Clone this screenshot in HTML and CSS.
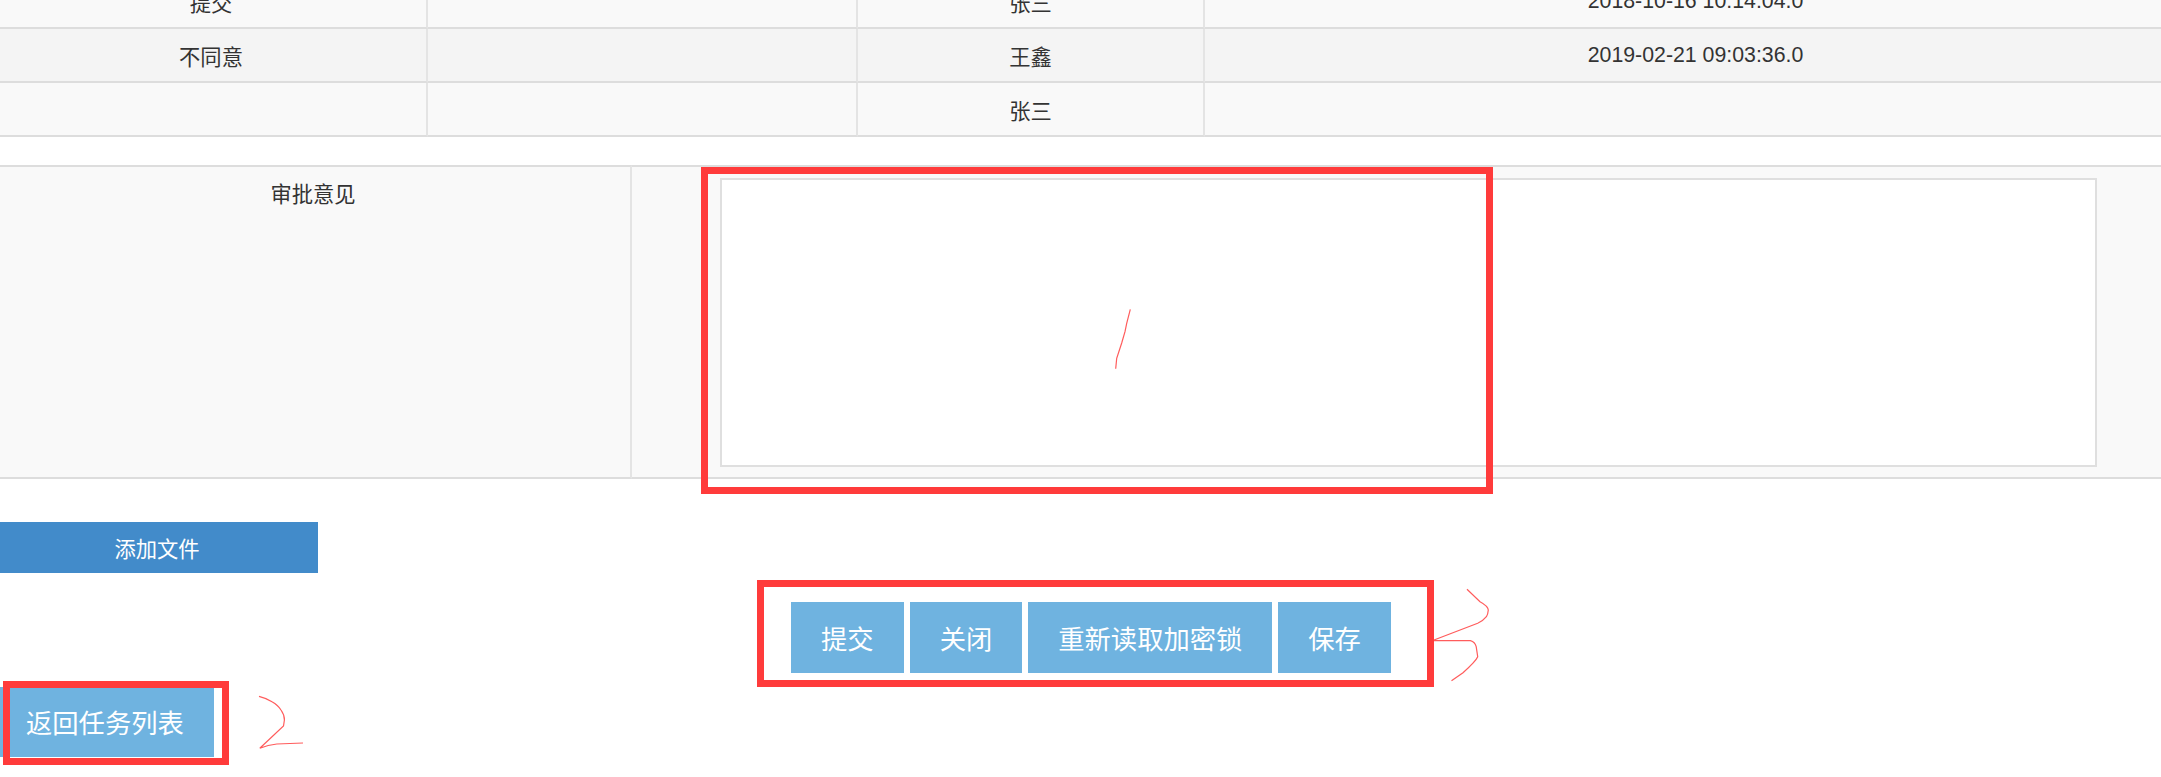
FILE: index.html
```html
<!DOCTYPE html>
<html>
<head>
  <meta charset="utf-8">
  <title>审批</title>
  <link rel="stylesheet" href="styles.css">
</head>
<body>
  <div class="page">
    <table class="history">
      <colgroup>
        <col class="col-result">
        <col class="col-note">
        <col class="col-user">
        <col class="col-time">
      </colgroup>
      <tr>
        <td>提交</td>
        <td></td>
        <td>张三</td>
        <td>2018-10-16 10:14:04.0</td>
      </tr>
      <tr class="even">
        <td>不同意</td>
        <td></td>
        <td>王鑫</td>
        <td>2019-02-21 09:03:36.0</td>
      </tr>
      <tr>
        <td></td>
        <td></td>
        <td>张三</td>
        <td></td>
      </tr>
    </table>

    <table class="approve">
      <colgroup>
        <col class="col-label">
        <col>
      </colgroup>
      <tr>
        <td class="approve-label">审批意见</td>
        <td class="approve-field"><textarea class="opinion"></textarea></td>
      </tr>
    </table>

    <button type="button" class="add-file">添加文件</button>

    <div class="actions">
      <button type="button" class="btn">提交</button>
      <button type="button" class="btn">关闭</button>
      <button type="button" class="btn">重新读取加密锁</button>
      <button type="button" class="btn">保存</button>
    </div>

    <button type="button" class="btn back">返回任务列表</button>
  </div>

  <!-- hand drawn notes on top of the screenshot -->
  <svg class="notes" width="2161" height="777" viewBox="0 0 2161 777">
    <rect class="box" x="704.5" y="170.5" width="785" height="320"/>
    <rect class="box" x="6.5" y="684.5" width="219" height="77"/>
    <rect class="box" x="760.5" y="583.5" width="670" height="100"/>
    <path class="pen" d="M1130.3 309.3 L1126.7 323.3 L1125 331.7 L1121.7 343 L1116.7 358.3 L1115.7 368.7"/>
    <path class="pen" d="M259 696.3 Q266 698 272 701.7 Q278 705 281 710 Q284.6 715 284.4 720 L283.5 726 L259.8 748.3 Q268 745 276.8 744 L303 743"/>
    <path class="pen" d="M1467 589.3 L1480 601.7 Q1488 606 1488.3 610 Q1488 614 1486.4 616.7 Q1483 621 1477.7 623.3 L1434 640"/>
    <path class="pen" d="M1434 640.7 L1470.4 640.7 Q1475 642 1476.2 646.7 L1477.7 656.7 Q1476 661 1463 672.7 L1451.5 680.7"/>
  </svg>
</body>
</html>
```

FILE: styles.css
```css
html, body { margin: 0; height: 777px; overflow: hidden; background: #fff; }
body { position: relative; font-family: "Liberation Sans", "Noto Sans CJK SC", sans-serif; color: #333; }
button { font-family: inherit; border: 0; color: #fff; margin: 0; }

.page { width: 2190px; margin: -25px 0 0 -4px; }

.history, .approve { width: 100%; table-layout: fixed; border-collapse: separate; border-spacing: 0; font-size: 21.3px; background: #f9f9f9; }
.history td { height: 51px; padding: 1px 0 0; text-align: center; vertical-align: middle; border-bottom: 2px solid #ddd; border-right: 2px solid #e4e4e4; }
.history .even td { background: #f4f4f4; }
.history td:last-child, .approve td:last-child { border-right: 0; }
.col-result { width: 432px; }
.col-note { width: 430px; }
.col-user { width: 347px; }

.approve { margin-top: 28px; }
.col-label { width: 636px; }
.approve td { border-top: 2px solid #ddd; border-bottom: 2px solid #ddd; border-right: 2px solid #e4e4e4; }
.approve-label { text-align: center; vertical-align: top; padding: 10px 0 0; }
.approve-field { padding: 11px 0 10px 88px; }
.opinion { display: block; box-sizing: border-box; width: 1377px; height: 289px; margin: 0; padding: 0; background: #fff; border: 2px solid #dfdfdf; resize: none; }

.add-file { display: block; width: 322px; height: 51px; margin-top: 43px; padding: 0; background: #428bca; font-size: 21.3px; }

.actions { display: flex; justify-content: center; gap: 6px; margin-top: 29px; }
.btn { height: 71px; padding: 0 30px; background: #6fb3e0; font-size: 26.3px; }
.back { display: block; height: 70px; margin-top: 14px; padding-bottom: 2px; }

.notes { position: absolute; left: 0; top: 0; pointer-events: none; }
.box { fill: none; stroke: #ff3b3b; stroke-width: 7; }
.pen { fill: none; stroke: #ff5c5c; stroke-width: 1.2; }
```
